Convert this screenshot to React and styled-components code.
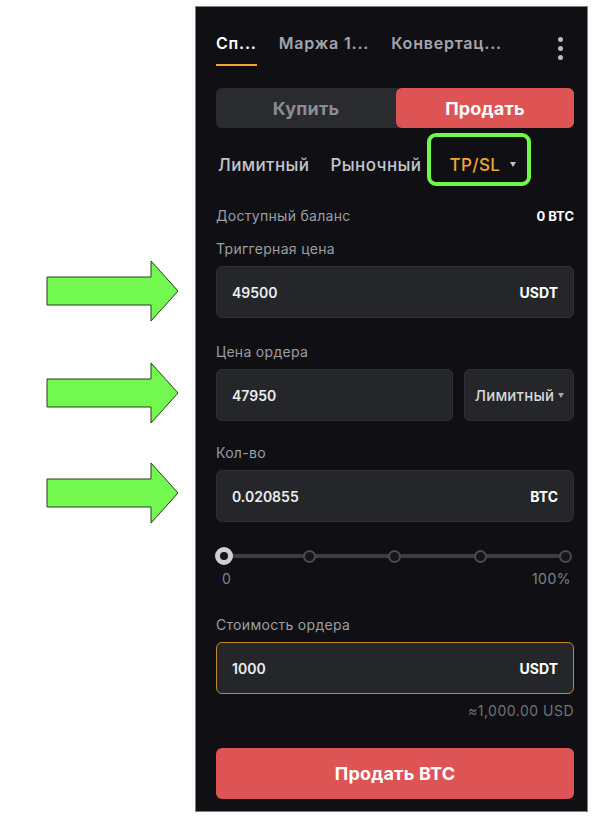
import React from "react";
import styled, { createGlobalStyle } from "styled-components";

const GlobalStyle = createGlobalStyle`
  body {
    margin: 0;
    background: #ffffff;
    font-family: "Inter", "Noto Sans", sans-serif;
  }
`;

const Canvas = styled.div`
  position: relative;
  width: 602px;
  height: 820px;
  padding: 6px 0 0 195px;
  box-sizing: border-box;
`;

const Arrow = styled.svg`
  position: absolute;
  left: 46px;
  top: ${(props) => props.top}px;
`;

const Panel = styled.div`
  width: 393px;
  height: 806px;
  box-sizing: border-box;
  border: 1px solid #7f7f7f;
  background: #101014;
  padding: 26px 13px 0 20px;
  display: flex;
  flex-direction: column;
`;

const TabBar = styled.div`
  display: flex;
  align-items: flex-start;
  gap: 22px;
`;

const Tab = styled.div`
  font-size: 16px;
  font-weight: 600;
  letter-spacing: 0.8px;
  line-height: 20px;
  padding-bottom: 11px;
  white-space: nowrap;
  color: ${(props) => (props.active ? "#ffffff" : "#a3a6ac")};
  border-bottom: 2px solid ${(props) => (props.active ? "#f0a633" : "transparent")};
`;

const Dots = styled.div`
  margin-left: auto;
  margin-right: 11px;
  margin-top: 4px;
  display: flex;
  flex-direction: column;
  gap: 4px;

  span {
    width: 5px;
    height: 5px;
    border-radius: 50%;
    background: #b9bbc0;
  }
`;

const Toggle = styled.div`
  margin-top: 22px;
  height: 40px;
  display: flex;
  background: #2a2b2f;
  border-radius: 6px;
`;

const Side = styled.div`
  flex: ${(props) => (props.sell ? "0 0 178px" : "1")};
  display: flex;
  align-items: center;
  justify-content: center;
  font-size: 18px;
  font-weight: 700;
  letter-spacing: 0.2px;
  border-radius: 6px;
  color: ${(props) => (props.sell ? "#ffffff" : "#8a8d93")};
  background: ${(props) => (props.sell ? "#de5454" : "transparent")};
`;

const TypeRow = styled.div`
  margin-top: 5px;
  height: 53px;
  display: flex;
  align-items: center;
  gap: 21px;
  padding-left: 2px;
`;

const TypeItem = styled.div`
  padding-top: 10px;
  font-size: 17px;
  font-weight: 500;
  letter-spacing: 0.4px;
  line-height: 20px;
  color: ${(props) => (props.active ? "#f0a633" : "#c3c5ca")};
  display: flex;
  align-items: center;
  gap: 10px;
`;

const Highlight = styled.div`
  margin-left: -15px;
  height: 53px;
  box-sizing: border-box;
  padding: 0 11px 0 18px;
  border: 4px solid #6ef84a;
  border-radius: 9px;
  display: flex;
  align-items: center;
`;

const Caret = styled.span`
  width: 0;
  height: 0;
  border-left: 3.5px solid transparent;
  border-right: 3.5px solid transparent;
  border-top: 5px solid ${(props) => props.color || "#c3c5ca"};
`;

const InfoRow = styled.div`
  margin-top: ${(props) => props.gap}px;
  display: flex;
  justify-content: space-between;
  line-height: 18px;
  font-size: 14px;
  letter-spacing: 0.3px;
  color: #9b9ea4;

  b {
    font-size: 13px;
    letter-spacing: 0;
    color: #ffffff;
    font-weight: 700;
  }
`;

const Label = styled.div`
  margin-top: ${(props) => props.gap}px;
  font-size: 14px;
  letter-spacing: 0.3px;
  line-height: 18px;
  color: #9b9ea4;
`;

const InputRow = styled.div`
  margin-top: 8px;
  display: flex;
  gap: 11px;
`;

const InputBox = styled.div`
  flex: ${(props) => (props.narrow ? "0 0 110px" : "1")};
  height: 52px;
  box-sizing: border-box;
  background: #25262a;
  border: 1px solid ${(props) => (props.focused ? "#c48a2c" : "#2e2f34")};
  border-radius: 6px;
  display: flex;
  align-items: center;
  justify-content: ${(props) => (props.narrow ? "center" : "space-between")};
  padding: 0 ${(props) => (props.narrow ? "0" : "15px")};
  font-size: 14px;
  font-weight: 600;
  color: #eceef1;
`;

const Unit = styled.span`
  font-weight: 700;
  color: #ffffff;
`;

const SelectText = styled.span`
  display: flex;
  align-items: center;
  gap: 4px;
  padding-left: 1px;
  font-size: 15px;
  font-weight: 500;
  letter-spacing: 0.2px;
  color: #d6d8dc;
`;

const Slider = styled.div`
  margin-top: 25px;
  height: 18px;
  padding: 0 8px;
  position: relative;
  display: flex;
  align-items: center;
  justify-content: space-between;

  &::before {
    content: "";
    position: absolute;
    left: 8px;
    right: 8px;
    top: 7px;
    height: 4px;
    background: #3d3e43;
  }
`;

const Node = styled.span`
  position: relative;
  box-sizing: border-box;
  width: ${(props) => (props.active ? 18 : 13)}px;
  height: ${(props) => (props.active ? 18 : 13)}px;
  margin: 0 ${(props) => (props.active ? -9 : -6)}px;
  border-radius: 50%;
  background: #15161a;
  border: ${(props) => (props.active ? "5px solid #cfd0d4" : "2px solid #4a4b50")};
`;

const Scale = styled.div`
  margin-top: 6px;
  display: flex;
  justify-content: space-between;
  padding: 0 3px 0 6px;
  font-size: 14px;
  letter-spacing: 0.5px;
  line-height: 16px;
  color: #7f8288;
`;

const Note = styled.div`
  margin-top: 8px;
  text-align: right;
  font-size: 14px;
  letter-spacing: 0.5px;
  line-height: 18px;
  color: #6f7278;
`;

const SellButton = styled.div`
  margin-top: 28px;
  height: 51px;
  border-radius: 6px;
  background: #de5454;
  display: flex;
  align-items: center;
  justify-content: center;
  font-size: 18px;
  font-weight: 700;
  letter-spacing: 0.2px;
  color: #ffffff;
`;

const GreenArrow = ({ top }) => (
  <Arrow top={top} width="134" height="62" viewBox="0 0 134 62">
    <polygon
      points="1,17 105,17 105,1 132,31 105,61 105,45 1,45"
      fill="#72f84f"
      stroke="#2a3a22"
      strokeWidth="1"
    />
  </Arrow>
);

const steps = [0, 25, 50, 75, 100];

export default function App() {
  return (
    <Canvas>
      <GlobalStyle />
      <GreenArrow top={260} />
      <GreenArrow top={362} />
      <GreenArrow top={462} />
      <Panel>
        <TabBar>
          <Tab active>Сп...</Tab>
          <Tab>Маржа 1...</Tab>
          <Tab>Конвертац...</Tab>
          <Dots>
            <span />
            <span />
            <span />
          </Dots>
        </TabBar>

        <Toggle>
          <Side>Купить</Side>
          <Side sell>Продать</Side>
        </Toggle>

        <TypeRow>
          <TypeItem>Лимитный</TypeItem>
          <TypeItem>Рыночный</TypeItem>
          <Highlight>
            <TypeItem active>
              TP/SL
              <Caret color="#c3c5ca" />
            </TypeItem>
          </Highlight>
        </TypeRow>

        <InfoRow gap={21}>
          <span>Доступный баланс</span>
          <b>0 BTC</b>
        </InfoRow>

        <Label gap={15}>Триггерная цена</Label>
        <InputRow>
          <InputBox>
            49500
            <Unit>USDT</Unit>
          </InputBox>
        </InputRow>

        <Label gap={25}>Цена ордера</Label>
        <InputRow>
          <InputBox>47950</InputBox>
          <InputBox narrow>
            <SelectText>
              Лимитный
              <Caret color="#a3a6ac" />
            </SelectText>
          </InputBox>
        </InputRow>

        <Label gap={23}>Кол-во</Label>
        <InputRow>
          <InputBox>
            0.020855
            <Unit>BTC</Unit>
          </InputBox>
        </InputRow>

        <Slider>
          {steps.map((s) => (
            <Node key={s} active={s === 0} />
          ))}
        </Slider>
        <Scale>
          <span>0</span>
          <span>100%</span>
        </Scale>

        <Label gap={29}>Стоимость ордера</Label>
        <InputRow>
          <InputBox focused>
            1000
            <Unit>USDT</Unit>
          </InputBox>
        </InputRow>
        <Note>≈1,000.00 USD</Note>

        <SellButton>Продать BTC</SellButton>
      </Panel>
    </Canvas>
  );
}
